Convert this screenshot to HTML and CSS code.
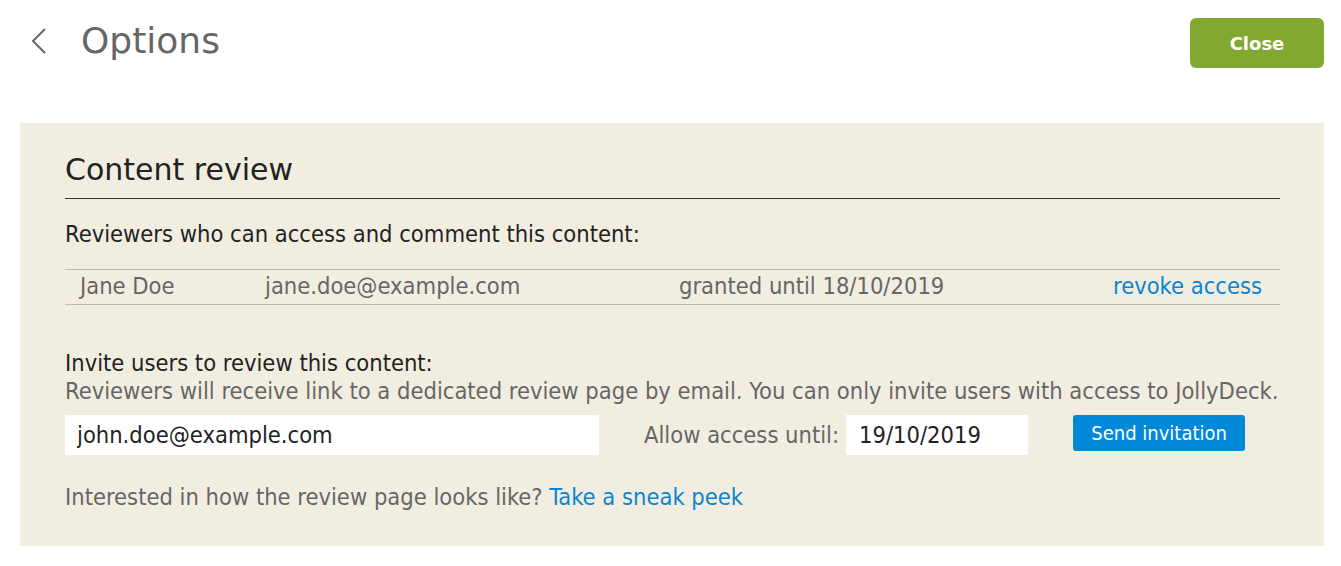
FILE: index.html
```html
<!DOCTYPE html>
<html>
<head>
  <title>Options</title>
  <link rel="stylesheet" href="styles.css">
</head>
<body>

  <div class="topbar">
    <div class="title-wrap">
      <a class="back" href="#">
        <svg width="18" height="28" viewBox="0 0 18 28"><path d="M15 2 L3 14 L15 26" fill="none" stroke="#666" stroke-width="2"/></svg>
      </a>
      <h1>Options</h1>
    </div>
    <button class="btn-close">Close</button>
  </div>

  <div class="panel">
    <h2>Content review</h2>

    <p class="label">Reviewers who can access and comment this content:</p>

    <table class="reviewers">
      <tbody id="reviewerRows"></tbody>
    </table>

    <div class="invite">
      <p class="label">Invite users to review this content:</p>
      <p class="hint">Reviewers will receive link to a dedicated review page by email. You can only invite users with access to JollyDeck.</p>
      <form class="invite-form" onsubmit="return false;">
        <input type="text" class="email" value="john.doe@example.com">
        <label class="until">Allow access until:</label>
        <input type="text" class="date" value="19/10/2019">
        <button type="submit" class="btn-send">Send invitation</button>
      </form>
    </div>

    <p class="peek">Interested in how the review page looks like? <a href="#">Take a sneak peek</a></p>
  </div>

  <script>
    const reviewers = [
      { nama: "Jane Doe", email: "jane.doe@example.com", until: "18/10/2019" }
    ];

    function renderReviewers() {
      const tbody = document.getElementById("reviewerRows");
      tbody.innerHTML = "";
      reviewers.forEach(r => {
        tbody.innerHTML += `<tr>
          <td class="c-name">${r.nama}</td>
          <td class="c-email">${r.email}</td>
          <td class="c-until">granted until ${r.until}</td>
          <td class="c-action"><a href="#">revoke access</a></td>
        </tr>`;
      });
    }

    renderReviewers();
  </script>

</body>
</html>
```

FILE: styles.css
```css
body {
  margin: 0;
  padding: 18px 17px 20px 20px;
  font-family: "DejaVu Sans Condensed", "DejaVu Sans", sans-serif;
  background: #fff;
  color: #222;
}
a {
  color: #0a85d1;
  text-decoration: none;
}
.topbar {
  display: flex;
  justify-content: space-between;
  align-items: flex-start;
  height: 105px;
}
.title-wrap {
  display: flex;
  align-items: center;
  gap: 33px;
  padding-left: 10px;
  margin-top: 2px;
}
.back {
  display: flex;
}
h1 {
  margin: 0;
  font-family: "DejaVu Sans", sans-serif;
  font-size: 36px;
  font-weight: normal;
  color: #666;
}
.btn-close {
  width: 134px;
  height: 50px;
  border: none;
  border-radius: 6px;
  background: #82a832;
  color: #fff;
  font-family: "DejaVu Sans", sans-serif;
  font-size: 18px;
  font-weight: bold;
}
.panel {
  background: #f2ede1;
  padding: 29px 44px 35px 45px;
}
h2 {
  margin: 0;
  padding-bottom: 10px;
  border-bottom: 1px solid #333;
  font-family: "DejaVu Sans", sans-serif;
  font-size: 30px;
  line-height: 36px;
  font-weight: normal;
  color: #222;
}
.label {
  margin: 22px 0 0;
  font-size: 23.5px;
  line-height: 27px;
}
.reviewers {
  width: 100%;
  border-collapse: collapse;
  margin-top: 21px;
}
.reviewers td {
  border-top: 1px solid #bbb;
  border-bottom: 1px solid #bbb;
  padding: 3px 0 4px;
  font-size: 23.5px;
  line-height: 27px;
  color: #666;
}
.c-name {
  padding-left: 15px !important;
  width: 185px;
}
.c-email {
  width: 414px;
}
.c-action {
  text-align: right;
  padding-right: 18px !important;
}
.invite {
  margin-top: 44px;
}
.invite .label {
  margin: 0;
  line-height: 28px;
}
.hint {
  margin: 0;
  font-size: 23.5px;
  line-height: 28px;
  color: #666;
}
.invite-form {
  display: flex;
  align-items: flex-start;
  margin-top: 10px;
}
.invite-form input {
  height: 40px;
  box-sizing: border-box;
  border: none;
  background: #fff;
  font-family: inherit;
  font-size: 23.5px;
  color: #222;
  padding: 0 12px;
}
.email {
  width: 534px;
}
.until {
  margin: 0 7px 0 45px;
  line-height: 40px;
  font-size: 23.5px;
  color: #666;
}
.date {
  width: 182px;
  padding-left: 13px !important;
}
.btn-send {
  margin-left: 45px;
  width: 172px;
  height: 36px;
  border: none;
  border-radius: 3px;
  background: #0288d8;
  color: #fff;
  font-family: inherit;
  font-size: 20px;
}
.peek {
  margin: 29px 0 0;
  font-size: 23.5px;
  line-height: 27px;
  color: #666;
}
```
